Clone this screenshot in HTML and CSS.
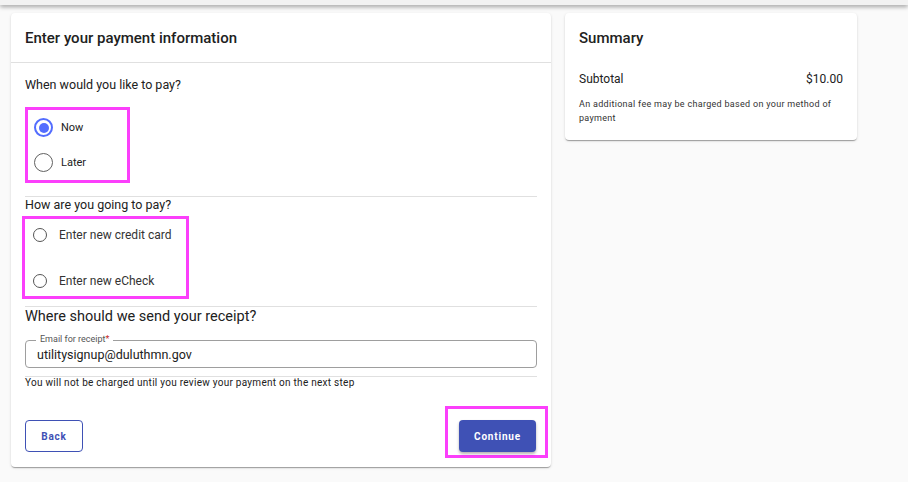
FILE: index.html
```html
<!DOCTYPE html>
<html lang="en">
<head>
<meta charset="utf-8">
<title>Payment</title>
<link rel="stylesheet" href="styles.css">
</head>
<body>
<div class="topbar"></div>
<div class="page">
  <div class="card main">
    <div class="card-header">Enter your payment information</div>
    <div class="card-body">
      <div class="question q1">When would you like to pay?</div>
      <div class="hl box-when">
        <label class="radio-row big"><span class="radio checked"></span><span>Now</span></label>
        <label class="radio-row big"><span class="radio"></span><span>Later</span></label>
      </div>
      <div class="divider d1"></div>
      <div class="question q2">How are you going to pay?</div>
      <div class="hl box-how">
        <label class="radio-row small"><span class="radio sm"></span><span>Enter new credit card</span></label>
        <label class="radio-row small"><span class="radio sm"></span><span>Enter new eCheck</span></label>
      </div>
      <div class="divider d2"></div>
      <div class="receipt-title">Where should we send your receipt?</div>
      <div class="field">
        <span class="field-label">Email for receipt<span class="req">*</span></span>
        <span class="field-value">utilitysignup@duluthmn.gov</span>
      </div>
      <div class="divider d3"></div>
      <div class="hint">You will not be charged until you review your payment on the next step</div>
      <div class="actions">
        <button class="btn btn-outline">Back</button>
        <div class="hl box-continue">
          <button class="btn btn-primary">Continue</button>
        </div>
      </div>
    </div>
  </div>
  <div class="card summary">
    <div class="summary-title">Summary</div>
    <div class="summary-row"><span>Subtotal</span><span>$10.00</span></div>
    <div class="summary-note">An additional fee may be charged based on your method of payment</div>
  </div>
</div>
</body>
</html>
```

FILE: styles.css
```css
* { box-sizing: border-box; }
html, body {
  margin: 0;
  padding: 0;
  background: #fafafa;
  font-family: Roboto, "Liberation Sans", Arial, sans-serif;
  color: #212121;
}
.topbar {
  height: 5px;
  background: #f2f2f2;
  box-shadow: 0 2px 4px rgba(0,0,0,0.35);
  position: relative;
  z-index: 2;
}
.page {
  display: flex;
  align-items: flex-start;
  gap: 14px;
  padding: 8px 11px;
}
.card {
  background: #fff;
  border-radius: 4px;
  box-shadow: 0 2px 1px -1px rgba(0,0,0,0.2), 0 1px 1px 0 rgba(0,0,0,0.14), 0 1px 3px 0 rgba(0,0,0,0.12);
}
.main { width: 540px; }
.card-header {
  height: 50px;
  padding: 0 14px;
  display: flex;
  align-items: center;
  font-size: 15px;
  font-weight: 500;
  border-bottom: 1px solid #e0e0e0;
}
.card-body {
  padding: 0 14px 9px 14px;
}
.question {
  font-size: 12.5px;
  line-height: 16px;
  color: #212121;
}
.q1 { padding-top: 14px; }
.hl {
  border: 3px solid #fb3ffb;
}
.box-when {
  margin-top: 14px;
  width: 105px;
  height: 76px;
  display: flex;
  flex-direction: column;
  padding-left: 6px;
}
.radio-row {
  display: flex;
  align-items: center;
  color: #212121;
}
.radio-row.big {
  height: 35px;
  gap: 8px;
  font-size: 11px;
}
.radio {
  width: 19px;
  height: 19px;
  border-radius: 50%;
  border: 1.5px solid #616161;
  flex: none;
  position: relative;
}
.radio.checked {
  border: 2px solid #536dfe;
}
.radio.checked::after {
  content: "";
  position: absolute;
  left: 2.5px;
  top: 2.5px;
  width: 10px;
  height: 10px;
  border-radius: 50%;
  background: #536dfe;
}
.radio.sm {
  width: 14px;
  height: 14px;
  border: 1.3px solid #555;
}
.divider {
  height: 1px;
  background: #e0e0e0;
}
.d1 { margin-top: 13px; }
.q2 { padding-top: 0; }
.box-how {
  margin-top: 3px;
  margin-left: -3px;
  width: 167px;
  height: 83px;
  display: flex;
  flex-direction: column;
  justify-content: space-between;
  padding: 1px 0 0 8px;
}
.radio-row.small {
  height: 30px;
  gap: 12px;
  font-size: 12px;
  color: #333;
}
.d2 { margin-top: 7px; }
.receipt-title {
  font-size: 14.5px;
  line-height: 20px;
  color: #212121;
}
.field {
  position: relative;
  margin-top: 13px;
  height: 28px;
  border: 1px solid #9e9e9e;
  border-radius: 4px;
  display: flex;
  align-items: center;
  padding-left: 11px;
}
.field-label {
  position: absolute;
  left: 10px;
  top: -8px;
  font-size: 9px;
  line-height: 12px;
  padding: 0 4px;
  background: #fff;
  color: #555;
}
.req { color: #c62828; }
.field-value {
  font-size: 12.5px;
  color: #212121;
}
.d3 { margin-top: 8px; }
.hint {
  font-size: 10px;
  line-height: 12px;
  letter-spacing: 0.27px;
  color: #212121;
}
.actions {
  margin-top: 17px;
  margin-right: -11px;
  display: flex;
  justify-content: space-between;
  align-items: flex-end;
}
.btn {
  font-family: Roboto, "Liberation Sans", Arial, sans-serif;
  font-size: 10px;
  font-weight: 700;
  letter-spacing: 0.8px;
  height: 32px;
  border-radius: 4px;
  cursor: pointer;
}
.btn-outline {
  width: 58px;
  background: #fff;
  color: #3f51b5;
  border: 1px solid #3f51b5;
  margin-bottom: 6px;
}
.box-continue {
  width: 103px;
  height: 52px;
  padding: 11px 0 0 11px;
}
.btn-primary {
  width: 77px;
  background: #3f51b5;
  color: #fff;
  border: none;
  box-shadow: 0 2px 3px rgba(0,0,0,0.3);
}
.summary {
  width: 292px;
  padding: 15px 14px 15px 14px;
}
.summary-title {
  font-size: 15px;
  font-weight: 500;
  line-height: 20px;
}
.summary-row {
  margin-top: 23px;
  display: flex;
  justify-content: space-between;
  font-size: 12px;
  line-height: 16px;
}
.summary-note {
  margin-top: 10px;
  font-size: 9px;
  line-height: 14px;
  letter-spacing: 0.3px;
  color: #333;
}
```
